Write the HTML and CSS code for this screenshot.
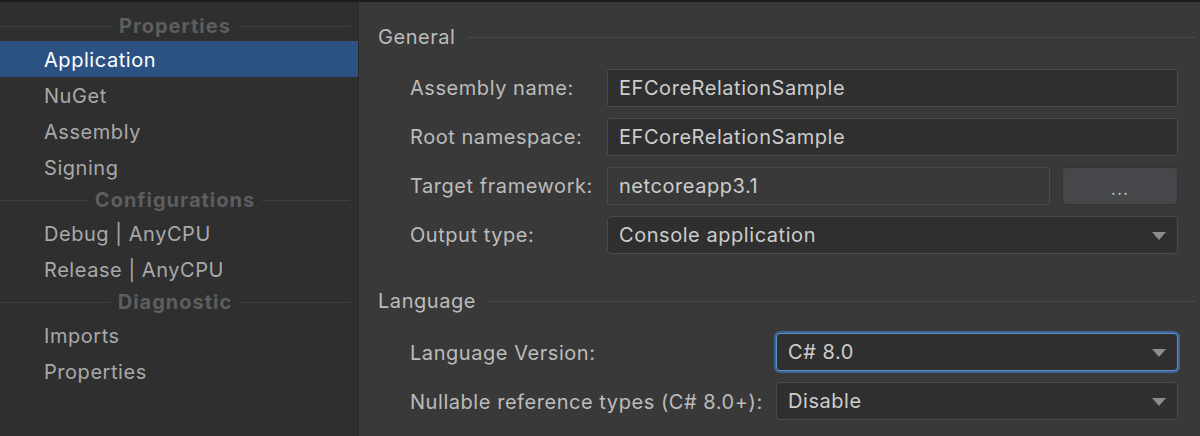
FILE: index.html
```html
<!DOCTYPE html>
<html>
	<head>
		<meta charset="UTF-8">
		<title>Project Properties</title>
		<link rel="stylesheet" href="styles.css">
	</head>
	<body>
		<div class="window">
			<ul class="side">
				<li class="group">Properties</li>
				<li class="item active">Application</li>
				<li class="item">NuGet</li>
				<li class="item">Assembly</li>
				<li class="item">Signing</li>
				<li class="group">Configurations</li>
				<li class="item">Debug | AnyCPU</li>
				<li class="item">Release | AnyCPU</li>
				<li class="group">Diagnostic</li>
				<li class="item">Imports</li>
				<li class="item">Properties</li>
			</ul>
			<div class="main">
				<h4 class="section">General</h4>
				<div class="form form-general">
					<label>Assembly name:</label>
					<div class="field">EFCoreRelationSample</div>
					<label>Root namespace:</label>
					<div class="field">EFCoreRelationSample</div>
					<label>Target framework:</label>
					<div class="split">
						<div class="field flat">netcoreapp3.1</div>
						<button class="btn">...</button>
					</div>
					<label>Output type:</label>
					<div class="field combo">Console application<i class="arrow"></i></div>
				</div>
				<h4 class="section lang">Language</h4>
				<div class="form form-lang">
					<label>Language Version:</label>
					<div class="field combo focus">C# 8.0<i class="arrow"></i></div>
					<label>Nullable reference types (C# 8.0+):</label>
					<div class="field combo">Disable<i class="arrow"></i></div>
				</div>
			</div>
		</div>
	</body>
</html>
```
FILE: styles.css
```css
body{
	margin: 0;
	background: #393939;
	font-family: Inter, "Noto Sans", sans-serif;
	letter-spacing: 0.55px;
}
.window{
	display: flex;
	height: 436px;
	box-sizing: border-box;
	border-top: 2px solid #1d1d1d;
}
.side{
	margin: 0;
	padding: 9px 0 0;
	width: 358px;
	flex: none;
	background: #2f2f2f;
	border-right: 1px solid #2a2a2a;
	list-style: none;
}
.group{
	display: flex;
	align-items: center;
	gap: 7px;
	width: 350px;
	height: 30px;
	font-size: 20px;
	font-weight: bold;
	letter-spacing: 1px;
	color: #5e5e5e;
}
.group::before,
.group::after{
	content: "";
	flex: 1;
	height: 1px;
	background: #3f3f3f;
}
.item{
	box-sizing: border-box;
	height: 36px;
	padding: 2px 0 0 44px;
	line-height: 34px;
	font-size: 20px;
	color: #a9a9a9;
}
.item.active{
	background: #2c5283;
	color: #fff;
}
.main{
	flex: 1;
	padding: 20px 5px 0 19px;
}
.section{
	margin: 0;
	display: flex;
	align-items: center;
	gap: 12px;
	height: 30px;
	font-size: 20px;
	font-weight: normal;
	color: #bcbcbc;
}
.section::after{
	content: "";
	flex: 1;
	height: 1px;
	background: #4a4a4a;
}
.section.lang{
	margin-top: 32px;
}
.form{
	display: grid;
	column-gap: 14px;
	row-gap: 11px;
	align-items: center;
	margin-top: 17px;
	padding: 0 17px 0 32px;
}
.form-general{
	grid-template-columns: 183px 1fr;
}
.form-lang{
	grid-template-columns: 352px 1fr;
}
.form label{
	font-size: 20px;
	color: #bcbcbc;
	white-space: nowrap;
}
.form-lang label{
	padding-top: 2px;
}
.field{
	position: relative;
	box-sizing: border-box;
	height: 38px;
	line-height: 36px;
	padding-left: 11px;
	border: 1px solid #4a4a4a;
	border-radius: 2px;
	background: #2f2f2f;
	font-size: 20px;
	color: #cdcdcd;
}
.split{
	display: flex;
	gap: 12px;
}
.field.flat{
	flex: 1;
	background: #393939;
}
.btn{
	width: 116px;
	height: 38px;
	border: 1px solid #333;
	border-radius: 5px;
	background: #46474a;
	color: #b9b9b9;
	font: 18px/30px Inter, sans-serif;
	letter-spacing: 1px;
	padding: 6px 0 0;
}
.combo{
	border-radius: 4px;
}
.combo.focus{
	border-color: #5f8fc6;
	box-shadow: 0 0 0 2px #3b6494;
}
.arrow{
	position: absolute;
	right: 11px;
	top: 15px;
	width: 0;
	height: 0;
	border-left: 7px solid transparent;
	border-right: 7px solid transparent;
	border-top: 8px solid #8c8c8c;
}
```
